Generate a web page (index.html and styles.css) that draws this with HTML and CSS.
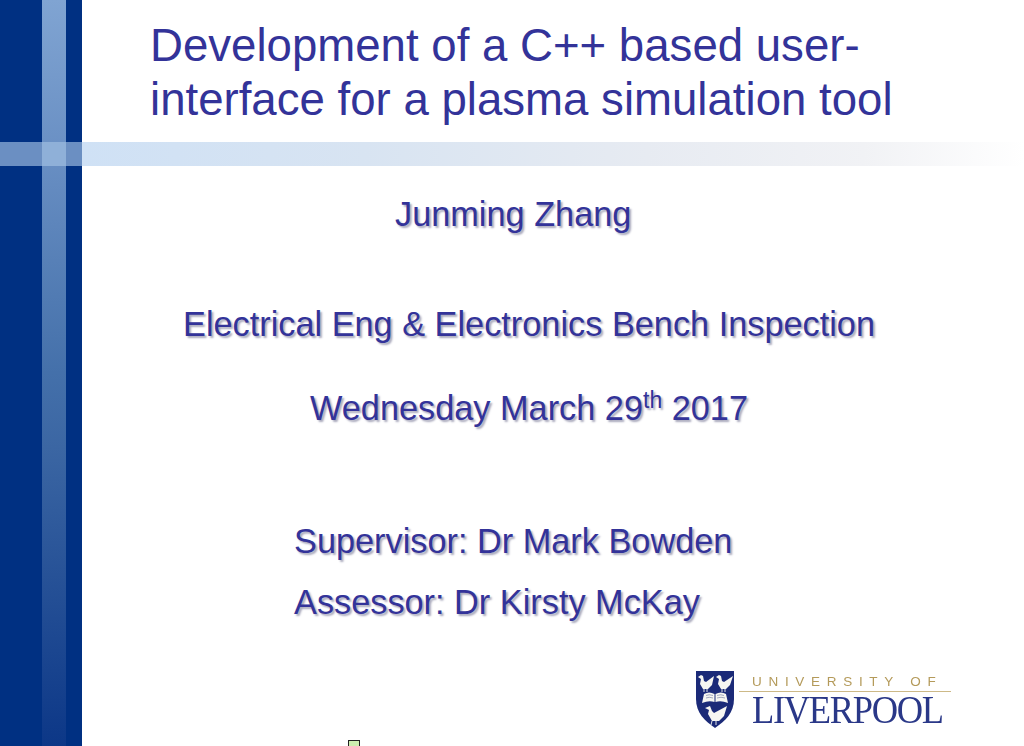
FILE: index.html
```html
<!DOCTYPE html>
<html lang="en">
<head>
<meta charset="utf-8">
<title>Development of a C++ based user-interface for a plasma simulation tool</title>
<link rel="stylesheet" href="styles.css">
</head>
<body>
<div class="slide">
  <div class="sidebar">
    <div class="side-dark"></div>
    <div class="side-stripe"></div>
    <div class="side-dark"></div>
  </div>
  <div class="band"></div>
  <div class="band-left"></div>
  <div class="band-cross"></div>
  <main class="main">
    <h1 class="title">Development of a C++ based user-<br>interface for a plasma simulation tool</h1>
    <p class="line line-name">Junming Zhang</p>
    <p class="line line-event">Electrical Eng &amp; Electronics Bench Inspection</p>
    <p class="line line-date">Wednesday March 29<sup class="sup">th</sup> 2017</p>
    <div class="people">
      <p class="line">Supervisor: Dr Mark Bowden</p>
      <p class="line line-assessor">Assessor: Dr Kirsty McKay</p>
    </div>
    <div class="logo">
      <svg class="shield" viewBox="0 0 40 58" width="40" height="58" aria-hidden="true">
        <path d="M1 1H39V29C39 43 30 51 20 58C10 51 1 43 1 29Z" fill="#1b2a78"/>
        <g fill="#f6f6f2">
          <path d="M3 7L6 5L8 6L9 11L11 12L19 6L17 15L13 19L8 19L5 14L6 9Z"/>
          <path d="M21 7L24 5L26 6L27 11L29 12L38 6L35 15L31 19L26 19L23 14L24 9Z"/>
          <path d="M9 24Q14 21 19.5 24V32Q14 30 7 33Z"/>
          <path d="M20.5 24Q26 21 31 24L33 33Q26 30 20.5 32Z"/>
          <path d="M10 38L15 36L17 41L19 43L32 36L29 46L24 51L17 51L13 44L14 40Z"/>
        </g>
        <g stroke="#f6f6f2" stroke-width="0.9" fill="none">
          <path d="M9 19V22M12 19V22M27 19V22M30 19V22M17 51L16 55M21 51L21 55"/>
        </g>
        <g stroke="#8088a8" stroke-width="0.7" fill="none">
          <path d="M11 25.5Q14 24 18 25.5M22 25.5Q26 24 29 25.5M11 28Q14 26.5 18 28M22 28Q26 26.5 30 28"/>
        </g>
      </svg>
      <div class="wordmark">
        <div class="wm-top">UNIVERSITY OF</div>
        <div class="wm-name">LIVERPOOL</div>
      </div>
    </div>
  </main>
  <div class="marker"></div>
</div>
</body>
</html>
```
FILE: styles.css
```css
html, body {
  margin: 0;
  padding: 0;
  background: #fff;
}
.slide {
  position: relative;
  width: 1024px;
  height: 746px;
  overflow: hidden;
  display: flex;
  font-family: "Liberation Sans", Arial, sans-serif;
  color: #333399;
}
.sidebar {
  flex: 0 0 82px;
  display: grid;
  grid-template-columns: 42px 24px 16px;
}
.side-dark {
  background: #003082;
}
.side-stripe {
  background: linear-gradient(to bottom, #80a4d2 0%, #6a90c4 20%, #4470aa 50%, #3b66a3 60%, #0c3787 100%);
}
.band {
  position: absolute;
  left: 82px;
  top: 142px;
  width: 942px;
  height: 24px;
  background: linear-gradient(to right, #cfe1f5 0%, #d8e4f2 30%, #e7ebf2 60%, #f1f2f5 83%, #ffffff 100%);
}
.band-left {
  position: absolute;
  left: 0;
  top: 142px;
  width: 82px;
  height: 24px;
  background: #6b8fc2;
}
.band-cross {
  position: absolute;
  left: 42px;
  top: 142px;
  width: 24px;
  height: 24px;
  background: #8fb0d8;
}
.main {
  flex: 1;
  display: flex;
  flex-direction: column;
  min-width: 0;
}
.title {
  margin: 19px 0 0 68px;
  font-size: 45.6px;
  font-weight: 400;
  line-height: 54px;
  color: #333399;
}
.line {
  margin: 0;
  font-size: 34.3px;
  line-height: 40px;
  white-space: nowrap;
  text-shadow: 2px 2px 2px #a9a9bc;
}
.line-name {
  margin: 67px 0 0 313px;
}
.line-event {
  margin: 70px 0 0 101px;
}
.line-date {
  margin: 44px 0 0 228px;
}
.sup {
  font-size: 23px;
  line-height: 0;
  vertical-align: 12px;
}
.people {
  margin: 93px 0 0 212px;
}
.line-assessor {
  margin-top: 21px;
}
.logo {
  margin: 48px 0 0 613px;
  display: flex;
  align-items: flex-start;
  gap: 4px;
  filter: blur(0.35px);
}
.shield {
  flex: none;
}
.wordmark {
  width: 212px;
  margin-top: 3px;
}
.wm-top {
  font-size: 13.5px;
  line-height: 18px;
  letter-spacing: 6.7px;
  color: #b49a5a;
  padding-left: 13px;
  white-space: nowrap;
  border-bottom: 1px solid #cdb987;
}
.wm-name {
  font-family: "Liberation Serif", "Times New Roman", serif;
  font-size: 41px;
  line-height: 35px;
  letter-spacing: -1.5px;
  color: #2a3888;
  margin-left: 13px;
  white-space: nowrap;
  transform: scaleX(0.89);
  transform-origin: left center;
}
.marker {
  position: absolute;
  left: 348px;
  top: 740px;
  width: 10px;
  height: 8px;
  background: #cdeeb0;
  border: 1px solid #222;
}
```
